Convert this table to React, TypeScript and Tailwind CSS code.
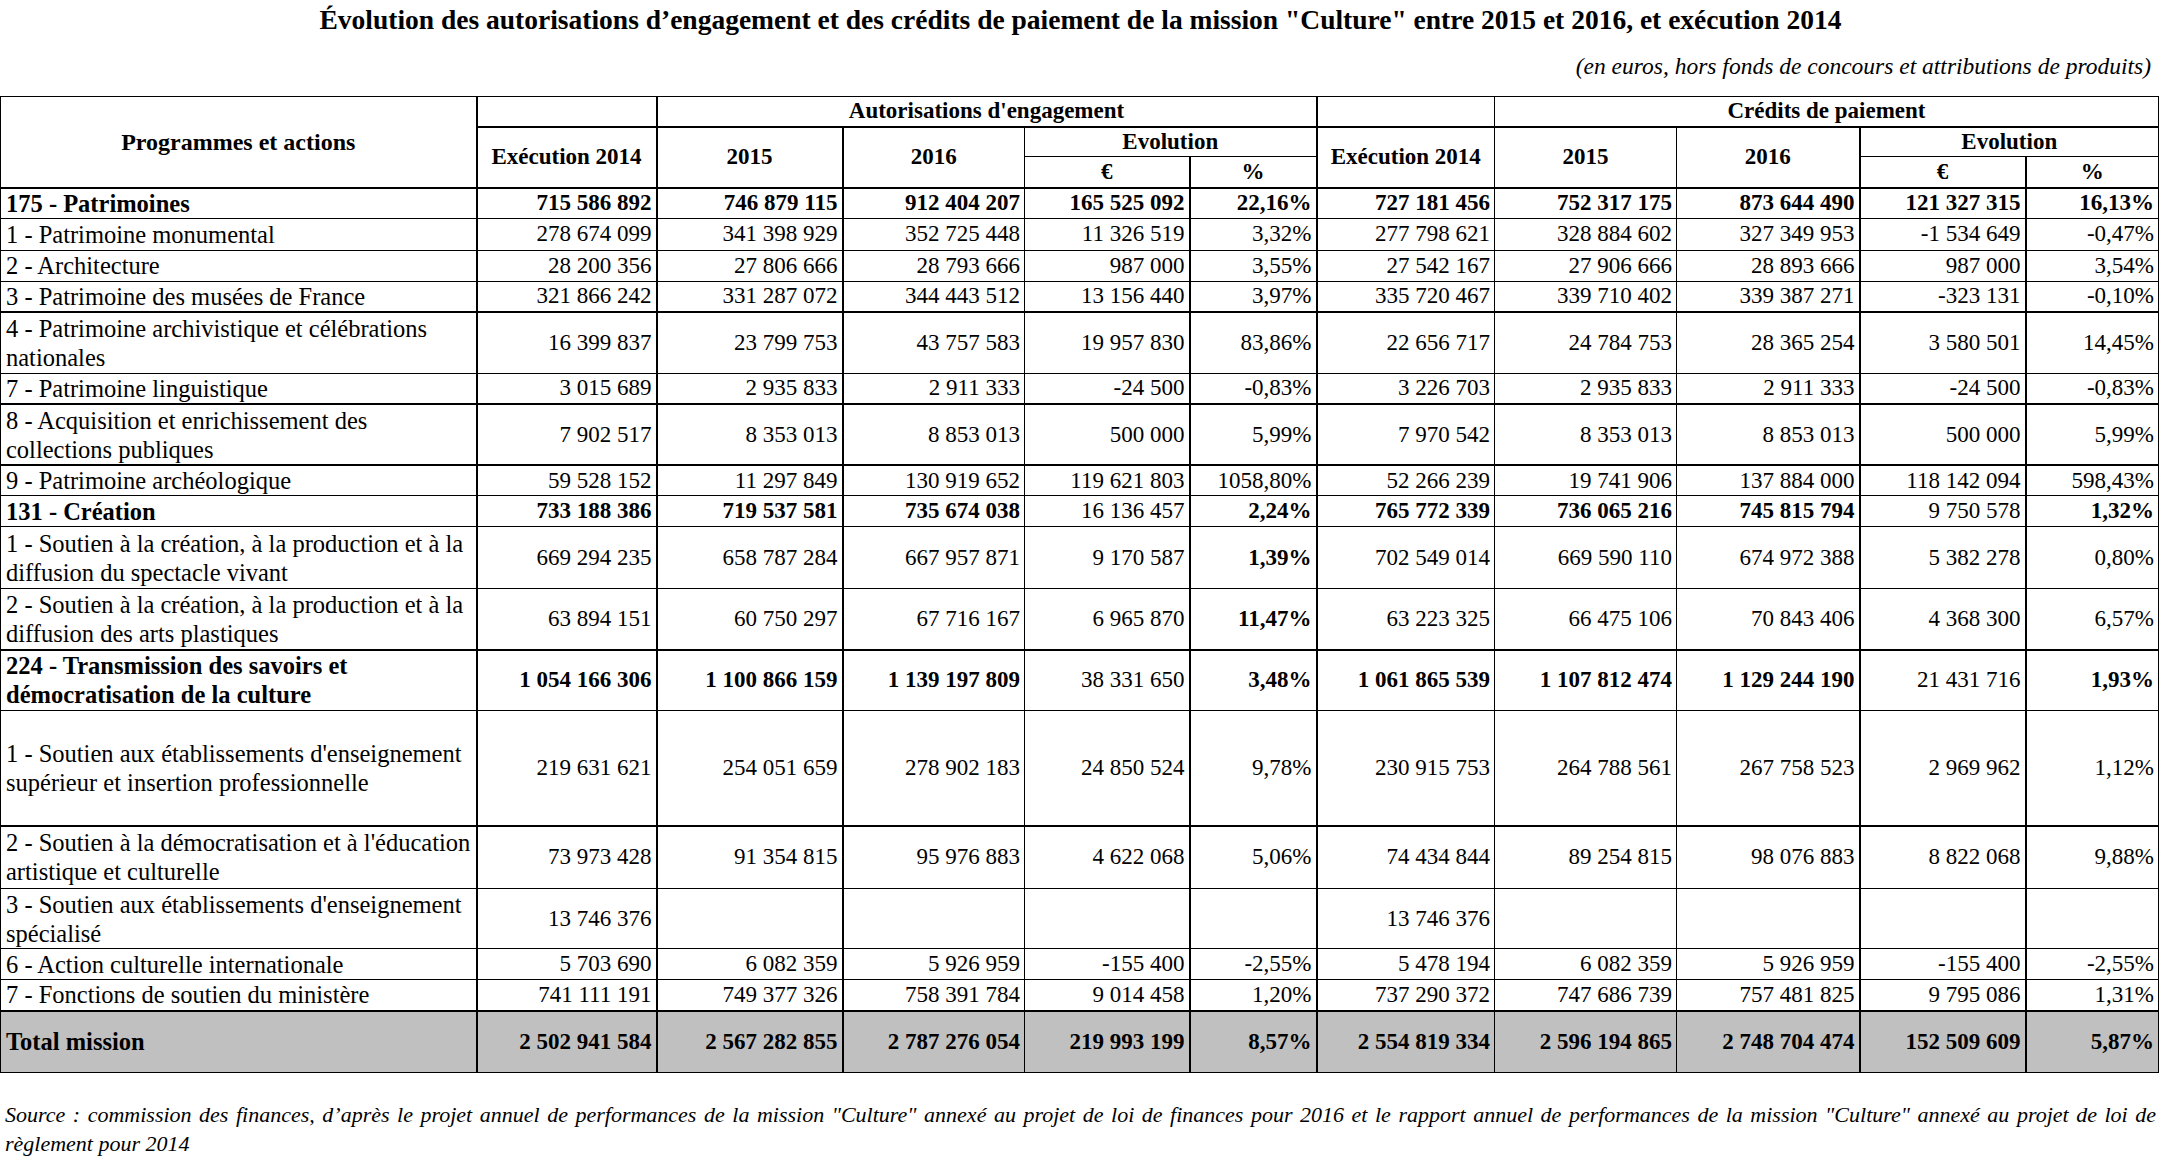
import clsx from "clsx";

type Row = {
  label: string[];
  vals: string[];
  h: string;
  strong?: boolean;
  normal?: number[];
  bold?: number[];
  thick?: boolean;
  total?: boolean;
};

// bordures droites par colonne (épaisseurs relevées sur le tableau d'origine)
const colRight = [
  "border-r-2",
  "border-r-2",
  "border-r-2",
  "border-r",
  "border-r-2",
  "border-r-2",
  "border-r",
  "border-r",
  "border-r-2",
  "border-r-2",
  "border-r",
];

const colWidths = [
  "w-[476px]",
  "w-[180px]",
  "w-[186px]",
  "w-[182px]",
  "w-[165px]",
  "w-[127px]",
  "w-[178px]",
  "w-[182px]",
  "w-[183px]",
  "w-[166px]",
  "w-[133px]",
];

const rows: Row[] = [
  {
    label: ["175 - Patrimoines"],
    strong: true,
    h: "h-[30px]",
    vals: ["715 586 892", "746 879 115", "912 404 207", "165 525 092", "22,16%", "727 181 456", "752 317 175", "873 644 490", "121 327 315", "16,13%"],
  },
  {
    label: ["1 - Patrimoine monumental"],
    h: "h-[32px]",
    vals: ["278 674 099", "341 398 929", "352 725 448", "11 326 519", "3,32%", "277 798 621", "328 884 602", "327 349 953", "-1 534 649", "-0,47%"],
  },
  {
    label: ["2 - Architecture"],
    h: "h-[31px]",
    vals: ["28 200 356", "27 806 666", "28 793 666", "987 000", "3,55%", "27 542 167", "27 906 666", "28 893 666", "987 000", "3,54%"],
  },
  {
    label: ["3 - Patrimoine des musées de France"],
    h: "h-[31px]",
    thick: true,
    vals: ["321 866 242", "331 287 072", "344 443 512", "13 156 440", "3,97%", "335 720 467", "339 710 402", "339 387 271", "-323 131", "-0,10%"],
  },
  {
    label: ["4 - Patrimoine archivistique et célébrations", "nationales"],
    h: "h-[61px]",
    vals: ["16 399 837", "23 799 753", "43 757 583", "19 957 830", "83,86%", "22 656 717", "24 784 753", "28 365 254", "3 580 501", "14,45%"],
  },
  {
    label: ["7 - Patrimoine linguistique"],
    h: "h-[31px]",
    thick: true,
    vals: ["3 015 689", "2 935 833", "2 911 333", "-24 500", "-0,83%", "3 226 703", "2 935 833", "2 911 333", "-24 500", "-0,83%"],
  },
  {
    label: ["8 - Acquisition et enrichissement des", "collections publiques"],
    h: "h-[61px]",
    thick: true,
    vals: ["7 902 517", "8 353 013", "8 853 013", "500 000", "5,99%", "7 970 542", "8 353 013", "8 853 013", "500 000", "5,99%"],
  },
  {
    label: ["9 - Patrimoine archéologique"],
    h: "h-[30px]",
    vals: ["59 528 152", "11 297 849", "130 919 652", "119 621 803", "1058,80%", "52 266 239", "19 741 906", "137 884 000", "118 142 094", "598,43%"],
  },
  {
    label: ["131 - Création"],
    strong: true,
    normal: [3, 8],
    h: "h-[31px]",
    vals: ["733 188 386", "719 537 581", "735 674 038", "16 136 457", "2,24%", "765 772 339", "736 065 216", "745 815 794", "9 750 578", "1,32%"],
  },
  {
    label: ["1 - Soutien à la création, à la production et à la", "diffusion du spectacle vivant"],
    bold: [4],
    h: "h-[62px]",
    vals: ["669 294 235", "658 787 284", "667 957 871", "9 170 587", "1,39%", "702 549 014", "669 590 110", "674 972 388", "5 382 278", "0,80%"],
  },
  {
    label: ["2 - Soutien à la création, à la production et à la", "diffusion des arts plastiques"],
    bold: [4],
    h: "h-[61px]",
    thick: true,
    vals: ["63 894 151", "60 750 297", "67 716 167", "6 965 870", "11,47%", "63 223 325", "66 475 106", "70 843 406", "4 368 300", "6,57%"],
  },
  {
    label: ["224 - Transmission des savoirs et", "démocratisation de la culture"],
    strong: true,
    normal: [3, 8],
    h: "h-[61px]",
    vals: ["1 054 166 306", "1 100 866 159", "1 139 197 809", "38 331 650", "3,48%", "1 061 865 539", "1 107 812 474", "1 129 244 190", "21 431 716", "1,93%"],
  },
  {
    label: ["1 - Soutien aux établissements d'enseignement", "supérieur et insertion professionnelle"],
    h: "h-[115px]",
    thick: true,
    vals: ["219 631 621", "254 051 659", "278 902 183", "24 850 524", "9,78%", "230 915 753", "264 788 561", "267 758 523", "2 969 962", "1,12%"],
  },
  {
    label: ["2 - Soutien à la démocratisation et à l'éducation", "artistique et culturelle"],
    h: "h-[63px]",
    vals: ["73 973 428", "91 354 815", "95 976 883", "4 622 068", "5,06%", "74 434 844", "89 254 815", "98 076 883", "8 822 068", "9,88%"],
  },
  {
    label: ["3 - Soutien aux établissements d'enseignement", "spécialisé"],
    h: "h-[60px]",
    vals: ["13 746 376", "", "", "", "", "13 746 376", "", "", "", ""],
  },
  {
    label: ["6 - Action culturelle internationale"],
    h: "h-[31px]",
    vals: ["5 703 690", "6 082 359", "5 926 959", "-155 400", "-2,55%", "5 478 194", "6 082 359", "5 926 959", "-155 400", "-2,55%"],
  },
  {
    label: ["7 - Fonctions de soutien du ministère"],
    h: "h-[31px]",
    thick: true,
    vals: ["741 111 191", "749 377 326", "758 391 784", "9 014 458", "1,20%", "737 290 372", "747 686 739", "757 481 825", "9 795 086", "1,31%"],
  },
  {
    label: ["Total mission"],
    strong: true,
    total: true,
    h: "h-[62px]",
    vals: ["2 502 941 584", "2 567 282 855", "2 787 276 054", "219 993 199", "8,57%", "2 554 819 334", "2 596 194 865", "2 748 704 474", "152 509 609", "5,87%"],
  },
];

function isBold(row: Row, i: number) {
  if (row.strong) return !(row.normal ?? []).includes(i);
  return (row.bold ?? []).includes(i);
}

export default function App() {
  return (
    <div className="w-[2161px] h-[1160px] overflow-hidden bg-white text-black font-[Liberation_Serif,serif] [font-family:Liberation_Serif,serif]">
      <h1 className="text-center text-[27.5px] font-bold leading-[40px]">
        Évolution des autorisations d’engagement et des crédits de paiement de la mission "Culture" entre 2015 et 2016, et exécution 2014
      </h1>
      <p className="mt-[11px] pr-[10px] text-right text-[23.5px] italic leading-[30px]">
        (en euros, hors fonds de concours et attributions de produits)
      </p>

      <table className="mt-[15px] w-[2158px] table-fixed border-collapse text-[23px] leading-[28px]">
        <colgroup>
          {colWidths.map((w, i) => (
            <col key={i} className={w} />
          ))}
        </colgroup>
        <thead className="font-bold">
          <tr className="h-[30px]">
            <th rowSpan={3} className="border-t border-l border-r-2 border-b-2 border-black align-middle text-[24px]">
              Programmes et actions
            </th>
            <th className="border-t border-r-2 border-b-2 border-black" />
            <th colSpan={4} className="border-t border-r-2 border-b-2 border-black">
              Autorisations d'engagement
            </th>
            <th className="border-t border-r border-b-2 border-black" />
            <th colSpan={4} className="border-t border-r border-b-2 border-black">
              Crédits de paiement
            </th>
          </tr>
          <tr className="h-[30px]">
            <th rowSpan={2} className="border-r-2 border-b-2 border-black">Exécution 2014</th>
            <th rowSpan={2} className="border-r-2 border-b-2 border-black">2015</th>
            <th rowSpan={2} className="border-r border-b-2 border-black">2016</th>
            <th colSpan={2} className="border-r-2 border-b border-black">Evolution</th>
            <th rowSpan={2} className="border-r border-b-2 border-black">Exécution 2014</th>
            <th rowSpan={2} className="border-r border-b-2 border-black">2015</th>
            <th rowSpan={2} className="border-r-2 border-b-2 border-black">2016</th>
            <th colSpan={2} className="border-r border-b border-black">Evolution</th>
          </tr>
          <tr className="h-[31px]">
            <th className="border-r-2 border-b-2 border-black">€</th>
            <th className="border-r-2 border-b-2 border-black">%</th>
            <th className="border-r-2 border-b-2 border-black">€</th>
            <th className="border-r border-b-2 border-black">%</th>
          </tr>
        </thead>
        <tbody>
          {rows.map((row, r) => (
            <tr key={r} className={clsx(row.h, row.total && "bg-[#c0c0c0]")}>
              <td
                className={clsx(
                  "border-l border-black pl-[5px] align-middle text-[24.5px] leading-[29px] text-left whitespace-nowrap",
                  colRight[0],
                  row.thick ? "border-b-2" : "border-b",
                  row.strong && "font-bold"
                )}
              >
                {row.label.map((line, k) => (
                  <div key={k}>{line}</div>
                ))}
              </td>
              {row.vals.map((v, i) => (
                <td
                  key={i}
                  className={clsx(
                    "border-black px-[4px] text-right align-middle whitespace-nowrap",
                    colRight[i + 1],
                    row.thick ? "border-b-2" : "border-b",
                    isBold(row, i) && "font-bold"
                  )}
                >
                  {v}
                </td>
              ))}
            </tr>
          ))}
        </tbody>
      </table>

      <div className="mt-[27px] px-[5px] text-[22px] italic leading-[29px]">
        <p className="text-justify [text-align-last:justify]">
          Source : commission des finances, d’après le projet annuel de performances de la mission "Culture" annexé au projet de loi de finances pour 2016 et le rapport annuel de performances de la mission "Culture" annexé au projet de loi de
        </p>
        <p>règlement pour 2014</p>
      </div>
    </div>
  );
}
